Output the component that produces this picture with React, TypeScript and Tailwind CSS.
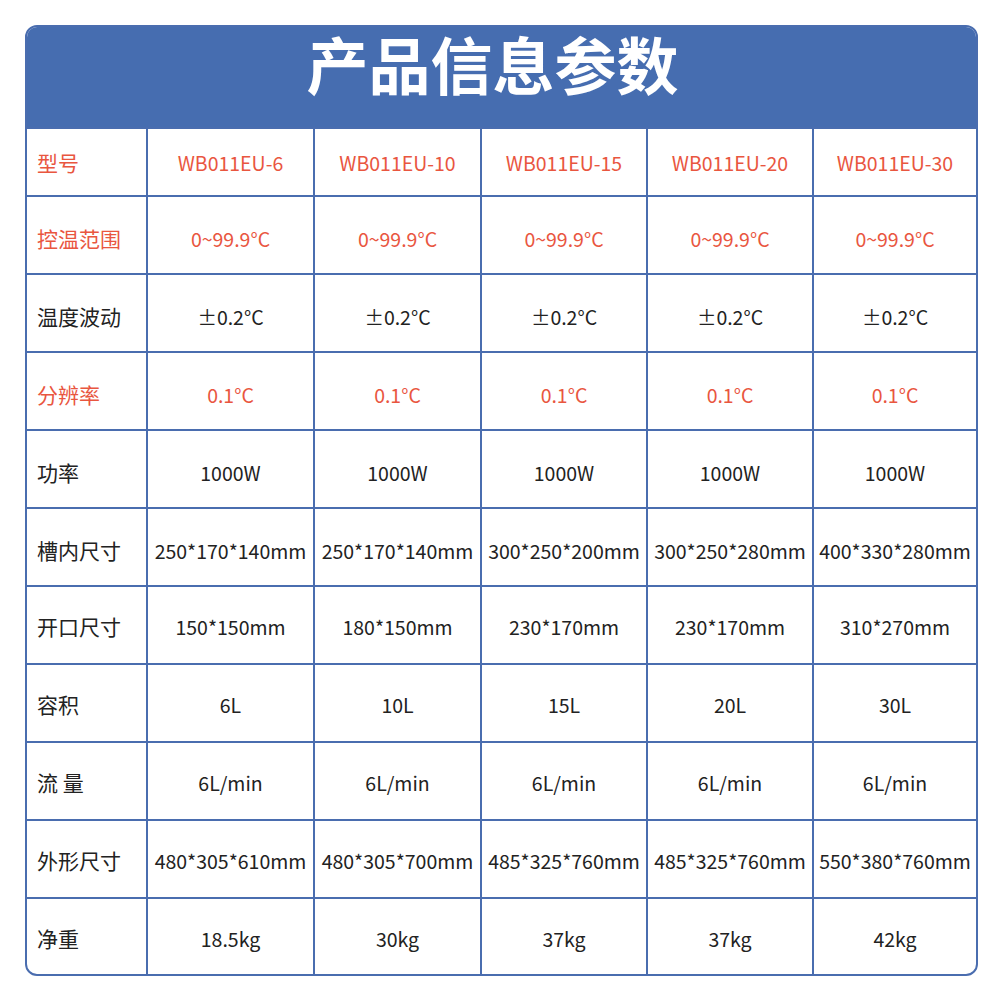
import React from 'react';

// 参数表数据
const rows: { label: string; values: string[]; red?: boolean }[] = [
  { label: '型号', values: ['WB011EU-6', 'WB011EU-10', 'WB011EU-15', 'WB011EU-20', 'WB011EU-30'], red: true },
  { label: '控温范围', values: ['0~99.9°C', '0~99.9°C', '0~99.9°C', '0~99.9°C', '0~99.9°C'], red: true },
  { label: '温度波动', values: ['±0.2°C', '±0.2°C', '±0.2°C', '±0.2°C', '±0.2°C'] },
  { label: '分辨率', values: ['0.1°C', '0.1°C', '0.1°C', '0.1°C', '0.1°C'], red: true },
  { label: '功率', values: ['1000W', '1000W', '1000W', '1000W', '1000W'] },
  { label: '槽内尺寸', values: ['250*170*140mm', '250*170*140mm', '300*250*200mm', '300*250*280mm', '400*330*280mm'] },
  { label: '开口尺寸', values: ['150*150mm', '180*150mm', '230*170mm', '230*170mm', '310*270mm'] },
  { label: '容积', values: ['6L', '10L', '15L', '20L', '30L'] },
  { label: '流 量', values: ['6L/min', '6L/min', '6L/min', '6L/min', '6L/min'] },
  { label: '外形尺寸', values: ['480*305*610mm', '480*305*700mm', '485*325*760mm', '485*325*760mm', '550*380*760mm'] },
  { label: '净重', values: ['18.5kg', '30kg', '37kg', '37kg', '42kg'] },
];

const colWidths = ['w-[167px]', 'w-[167px]', 'w-[166px]', 'w-[166px]', 'w-[164px]'];

// 每行高度和文字下移
const rowHeight = (i: number) => (i === 0 ? 'h-[68px]' : i === rows.length - 1 ? 'h-[77px]' : 'h-[78px]');
const rowPad = (i: number) => (i === 0 ? 'pt-[2px]' : i < 6 ? 'pt-[7px]' : 'pt-[4px]');

const App: React.FC = () => {
  return (
    <div
      className="w-[1000px] h-[1000px] bg-white pt-[25px] pl-[25px]"
      style={{ fontFamily: '"Noto Sans CJK SC", "Noto Sans", sans-serif' }}
    >
      <div className="w-[953px] border-2 border-[#4a6daf] rounded-[12px] bg-white">
        {/* 标题 */}
        <div className="h-[100px] bg-[#466db0] rounded-t-[10px] flex items-center justify-center pr-[18px] pb-[28px]">
          <h1 className="text-white text-[62px] font-bold leading-[1.5]">产品信息参数</h1>
        </div>

        {rows.map((row, i) => (
          <div key={row.label} className={`flex border-t-2 border-[#4a6daf] ${rowHeight(i)}`}>
            <div
              className={`w-[119px] flex items-center pl-[10px] text-[21px] ${rowPad(i)} ${row.red ? 'text-[#e9563f]' : 'text-[#222]'}`}
            >
              {row.label}
            </div>
            {row.values.map((v, j) => (
              <div
                key={j}
                className={`${colWidths[j]} border-l-2 border-[#4a6daf] flex items-center justify-center text-[19.5px] whitespace-nowrap ${rowPad(i)} ${row.red ? 'text-[#e9563f]' : 'text-[#222]'}`}
              >
                {v}
              </div>
            ))}
          </div>
        ))}
      </div>
    </div>
  );
};

export default App;
